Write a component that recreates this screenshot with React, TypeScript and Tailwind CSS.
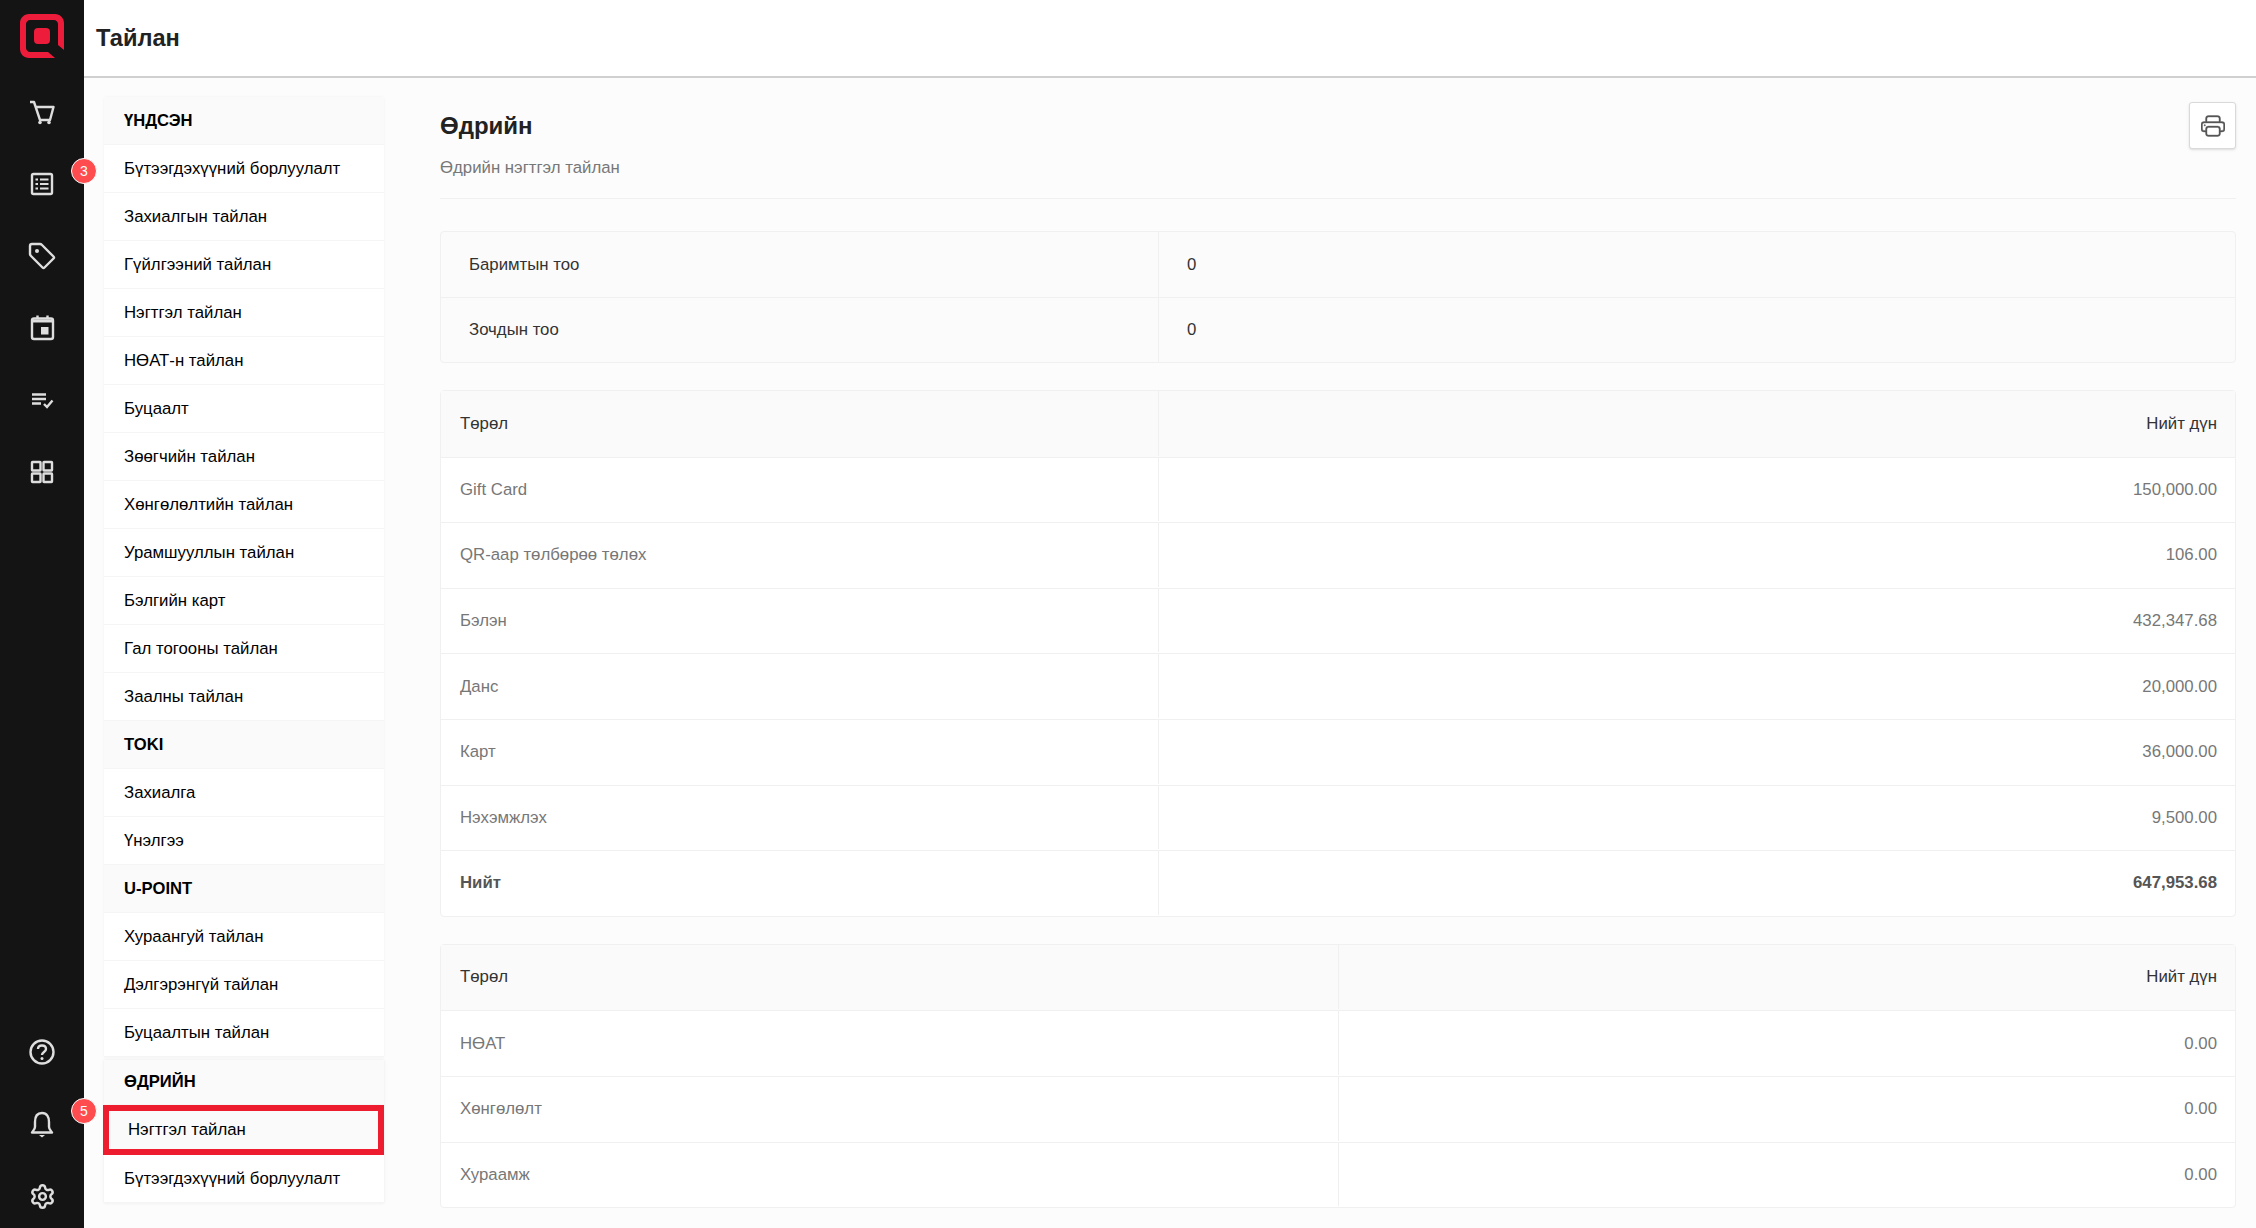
import { Settings } from "lucide-react";
import { BsPrinter } from "react-icons/bs";

type MenuGroup = { title: string; items: string[] };

const groups: MenuGroup[] = [
  {
    title: "ҮНДСЭН",
    items: [
      "Бүтээгдэхүүний борлуулалт",
      "Захиалгын тайлан",
      "Гүйлгээний тайлан",
      "Нэгтгэл тайлан",
      "НӨАТ-н тайлан",
      "Буцаалт",
      "Зөөгчийн тайлан",
      "Хөнгөлөлтийн тайлан",
      "Урамшууллын тайлан",
      "Бэлгийн карт",
      "Гал тогооны тайлан",
      "Заалны тайлан",
    ],
  },
  { title: "TOKI", items: ["Захиалга", "Үнэлгээ"] },
  { title: "U-POINT", items: ["Хураангуй тайлан", "Дэлгэрэнгүй тайлан", "Буцаалтын тайлан"] },
];

const payments = [
  ["Gift Card", "150,000.00"],
  ["QR-аар төлбөрөө төлөх", "106.00"],
  ["Бэлэн", "432,347.68"],
  ["Данс", "20,000.00"],
  ["Карт", "36,000.00"],
  ["Нэхэмжлэх", "9,500.00"],
];

const taxes = [
  ["НӨАТ", "0.00"],
  ["Хөнгөлөлт", "0.00"],
  ["Хураамж", "0.00"],
];

function Logo() {
  return (
    <svg width="44" height="44" viewBox="0 0 44 44" aria-label="logo">
      <path
        d="M9 0H35C40 0 44 4 44 9V36L38 31V10C38 8 36 6 34 6H10C8 6 6 8 6 10V34C6 36 8 38 10 38H28L35 44H9C4 44 0 40 0 35V9C0 4 4 0 9 0Z"
        fill="#ed1c3a"
      />
      <rect x="14" y="14" width="16" height="16" rx="4" fill="#ed1c3a" />
    </svg>
  );
}

function Glyph({ children }: { children: React.ReactNode }) {
  return (
    <svg width="44" height="44" viewBox="0 0 44 44" fill="none" stroke="currentColor" strokeWidth="2.4">
      {children}
    </svg>
  );
}

function CartIcon() {
  return (
    <Glyph>
      <path d="M10 12H14L20 30H30L33.5 17H15.5" strokeLinejoin="round" />
      <circle cx="20" cy="32.5" r="1.8" fill="currentColor" stroke="none" />
      <circle cx="29" cy="32.5" r="1.8" fill="currentColor" stroke="none" />
    </Glyph>
  );
}

function ListIcon() {
  return (
    <Glyph>
      <rect x="12" y="12" width="20" height="20" rx="1.5" />
      <path d="M15.5 17.5H18M15.5 22H18M15.5 26.5H18M20 17.5H28.5M20 22H28.5M20 26.5H28.5" strokeWidth="2.2" />
    </Glyph>
  );
}

function TagIcon() {
  return (
    <Glyph>
      <path d="M12 10H20Q21 10 22 11L33.5 22.5Q34.5 23.5 33.5 24.5L24.5 33.5Q23.5 34.5 22.5 33.5L11 22Q10 21 10 20V12Q10 10 12 10Z" />
      <circle cx="17" cy="17" r="2" fill="currentColor" stroke="none" />
    </Glyph>
  );
}

function CalendarIcon() {
  return (
    <Glyph>
      <rect x="12" y="12.5" width="21" height="20.5" rx="2" />
      <path d="M12 15H33" strokeWidth="3" />
      <path d="M17.5 9.5V12M27.5 9.5V12" />
      <rect x="21" y="21" width="7.5" height="7.5" fill="currentColor" stroke="none" />
    </Glyph>
  );
}

function ChecklistIcon() {
  return (
    <Glyph>
      <path d="M12 16.5H26M12 21H26M12 25.5H21" />
      <path d="M24 26L27 29L32.5 22.5" />
    </Glyph>
  );
}

function GridIcon() {
  return (
    <Glyph>
      <rect x="12" y="12" width="8.5" height="8.5" rx="0.5" />
      <rect x="23.5" y="12" width="8.5" height="8.5" rx="0.5" />
      <rect x="12" y="23.5" width="8.5" height="8.5" rx="0.5" />
      <rect x="23.5" y="23.5" width="8.5" height="8.5" rx="0.5" />
    </Glyph>
  );
}

function HelpIcon() {
  return (
    <Glyph>
      <circle cx="22" cy="22" r="11.5" />
      <path d="M18 19C18 16.5 20 15.5 22 15.5C24.5 15.5 26 17 26 19C26 22 22 22 22 25" />
      <circle cx="22" cy="28.5" r="1.5" fill="currentColor" stroke="none" />
    </Glyph>
  );
}

function BellIcon() {
  return (
    <Glyph>
      <path d="M22 11C17 11 15 15 15 20V25C15 27 13 29 12 30.5H32C31 29 29 27 29 25V20C29 15 27 11 22 11Z" strokeLinejoin="round" />
      <path d="M19 33H25L22 35.5Z" fill="currentColor" stroke="none" />
    </Glyph>
  );
}

function Badge({ value }: { value: number }) {
  return (
    <span className="absolute top-[10px] left-[71px] flex h-[26px] w-[26px] items-center justify-center rounded-full border border-white bg-[#ff4d4f] text-[14px] text-white">
      {value}
    </span>
  );
}

function NavIcon({ children, badge }: { children: React.ReactNode; badge?: number }) {
  return (
    <div className="relative flex h-[72px] w-full items-center justify-center text-[#dedede]">
      {children}
      {badge !== undefined && <Badge value={badge} />}
    </div>
  );
}

function Sidebar() {
  return (
    <aside className="flex h-full w-[84px] shrink-0 flex-col items-center bg-[#141414]">
      <div className="flex h-[76px] w-full shrink-0 items-end justify-center pb-[18px]">
        <Logo />
      </div>
      <NavIcon>
        <CartIcon />
      </NavIcon>
      <NavIcon badge={3}>
        <ListIcon />
      </NavIcon>
      <NavIcon>
        <TagIcon />
      </NavIcon>
      <NavIcon>
        <CalendarIcon />
      </NavIcon>
      <NavIcon>
        <ChecklistIcon />
      </NavIcon>
      <NavIcon>
        <GridIcon />
      </NavIcon>
      <div className="flex-1" />
      <NavIcon>
        <HelpIcon />
      </NavIcon>
      <NavIcon badge={5}>
        <BellIcon />
      </NavIcon>
      <div className="mb-[-4px] w-full">
        <NavIcon>
          <Settings size={27} strokeWidth={2.2} />
        </NavIcon>
      </div>
    </aside>
  );
}

function MenuHeader({ title, className = "h-12" }: { title: string; className?: string }) {
  return (
    <div className={`flex items-center border-b border-[#f5f5f5] bg-[#fafafa] pt-px pl-5 text-[16.6px] font-bold text-black ${className}`}>
      {title}
    </div>
  );
}

function MenuRow({ label }: { label: string }) {
  return (
    <div className="flex h-12 items-center border-b border-[#f5f5f5] bg-white pl-5 text-[16.8px] text-black">
      {label}
    </div>
  );
}

function ReportMenu() {
  return (
    <nav className="flex w-[280px] shrink-0 flex-col">
      <div className="rounded-t shadow-[0_0_3px_rgba(0,0,0,0.05)]">
        {groups.map((group) => (
          <div key={group.title}>
            <MenuHeader title={group.title} />
            {group.items.map((item) => (
              <MenuRow key={item} label={item} />
            ))}
          </div>
        ))}
      </div>
      <div className="mt-[3px] shadow-[0_0_3px_rgba(0,0,0,0.08)]">
        <MenuHeader title="ӨДРИЙН" className="h-[45px]" />
        <div className="ml-[-1px] flex h-[50px] items-center border-[6px] border-[#ed1c2e] bg-[#fafafa] pl-[19px] text-[16.8px] text-black">
          Нэгтгэл тайлан
        </div>
        <MenuRow label="Бүтээгдэхүүний борлуулалт" />
      </div>
    </nav>
  );
}

function AmountRow({
  label,
  value,
  labelWidth,
  className,
}: {
  label: string;
  value: string;
  labelWidth: string;
  className: string;
}) {
  return (
    <div className={`flex h-[65.6px] pb-px ${className}`}>
      <div className={`flex items-center border-r border-[#f0f0f0] pl-[19px] ${labelWidth}`}>{label}</div>
      <div className="flex flex-1 items-center justify-end pr-[18px]">{value}</div>
    </div>
  );
}

function AmountTable({
  rows,
  total,
  labelWidth,
}: {
  rows: string[][];
  total?: string[];
  labelWidth: string;
}) {
  return (
    <div className="rounded-sm border border-[#f0f0f0] bg-white text-[16.8px]">
      <AmountRow label="Төрөл" value="Нийт дүн" labelWidth={labelWidth} className="bg-[#fafafa] text-[#333]" />
      {rows.map(([label, value]) => (
        <AmountRow
          key={label}
          label={label}
          value={value}
          labelWidth={labelWidth}
          className="border-t border-[#f0f0f0] text-[#777]"
        />
      ))}
      {total && (
        <AmountRow
          label={total[0]}
          value={total[1]}
          labelWidth={labelWidth}
          className="border-t border-[#f0f0f0] font-bold text-[#555]"
        />
      )}
    </div>
  );
}

function Report() {
  return (
    <section className="min-w-0 flex-1">
      <div className="flex items-start justify-between">
        <div>
          <h2 className="pt-[12px] text-[24px] leading-[34px] font-bold text-[#222]">Өдрийн</h2>
          <p className="mt-[13px] text-[16.8px] leading-[24px] text-[#777]">Өдрийн нэгтгэл тайлан</p>
        </div>
        <button
          type="button"
          aria-label="Print"
          className="mt-[5px] flex h-[47px] w-[47px] items-center justify-center rounded-[3px] border border-[#d9d9d9] bg-white text-[#555] shadow-sm"
        >
          <BsPrinter size={24} stroke="currentColor" strokeWidth={0.25} />
        </button>
      </div>
      <hr className="mt-[18px] border-[#f0f0f0]" />

      <div className="mt-[32px] rounded-sm border border-[#f0f0f0] bg-[#fbfbfb] text-[16.8px] text-[#333]">
        <div className="flex h-[65px]">
          <div className="flex w-[718px] items-center border-r border-[#f0f0f0] pl-[28px]">Баримтын тоо</div>
          <div className="flex flex-1 items-center pl-[28px]">0</div>
        </div>
        <div className="flex h-[65px] border-t border-[#f0f0f0]">
          <div className="flex w-[718px] items-center border-r border-[#f0f0f0] pl-[28px]">Зочдын тоо</div>
          <div className="flex flex-1 items-center pl-[28px]">0</div>
        </div>
      </div>

      <div className="mt-[27px]">
        <AmountTable rows={payments} total={["Нийт", "647,953.68"]} labelWidth="w-[718px]" />
      </div>
      <div className="mt-[27px]">
        <AmountTable rows={taxes} labelWidth="w-[898px]" />
      </div>
    </section>
  );
}

export default function App() {
  return (
    <div
      className="flex h-[1228px] w-full overflow-hidden bg-[#fcfcfc]"
      style={{ fontFamily: '"Liberation Sans", Arial, sans-serif' }}
    >
      <Sidebar />
      <div className="flex min-w-0 flex-1 flex-col">
        <header className="flex h-[78px] shrink-0 items-center border-b-2 border-[#d0d0d0] bg-white pt-px pl-[12px] text-[23.6px] font-bold text-[#222]">
          Тайлан
        </header>
        <main className="flex gap-[56px] pt-[19px] pr-[20px] pl-[20px]">
          <ReportMenu />
          <Report />
        </main>
      </div>
    </div>
  );
}
